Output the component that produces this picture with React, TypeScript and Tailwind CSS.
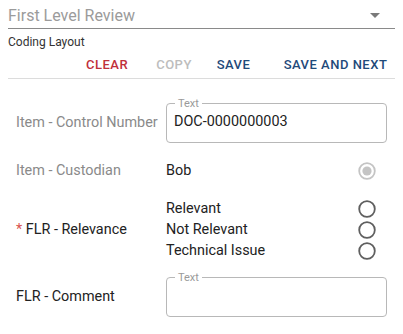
import React from "react";

const Radio = ({ disabled }: { disabled?: boolean }) =>
  disabled ? (
    <svg width="18" height="18" viewBox="0 0 18 18">
      <circle cx="9" cy="9" r="7.8" fill="none" stroke="#c4c4c4" strokeWidth="1.8" />
      <circle cx="9" cy="9" r="4.6" fill="#c4c4c4" />
    </svg>
  ) : (
    <svg width="18" height="18" viewBox="0 0 18 18">
      <circle cx="9" cy="9" r="7.8" fill="none" stroke="#5f5f5f" strokeWidth="1.8" />
    </svg>
  );

const TextBox = ({ value }: { value?: string }) => (
  <fieldset className="h-[45px] w-[221px] shrink-0 rounded-[4px] border border-[#b8b8b8] px-[7px]">
    <legend className="ml-[1px] px-[3px] text-[11px] leading-[11px] text-[#9a9a9a]">Text</legend>
    <div className="mt-[3px] text-[14.4px] leading-[20px] text-[#222]">{value}</div>
  </fieldset>
);

export default function App() {
  return (
    <div
      className="w-[403px] bg-white px-2"
      style={{ fontFamily: "Roboto, 'Liberation Sans', sans-serif" }}
    >
      <div className="flex h-[29px] items-center justify-between border-b border-[#8a8a8a] pt-[3px]">
        <span className="text-[16px] text-[#9b9b9b]">First Level Review</span>
        <svg width="10" height="5" viewBox="0 0 10 5" className="mr-[15px]">
          <path d="M0 0h10L5 5z" fill="#7a7a7a" />
        </svg>
      </div>
      <div className="pt-[6px] text-[12px] leading-[14px] text-[#333]">Coding Layout</div>
      <div className="flex h-[30px] items-center whitespace-nowrap border-b border-[#dcdcdc] pt-[2px] text-[13px] font-medium tracking-[0.5px]">
        <span className="ml-[79px] flex w-[40px] justify-center text-[#c0303a]">CLEAR</span>
        <span className="ml-[30px] flex w-[34px] justify-center text-[#bdbdbd]">COPY</span>
        <span className="ml-[26px] flex w-[33px] justify-center text-[#1f4a7a]">SAVE</span>
        <span className="ml-[34px] flex w-[103px] justify-center text-[#1f4a7a]">SAVE AND NEXT</span>
      </div>

      <div className="mt-[19px] flex items-center pl-2 text-[14.4px]">
        <span className="w-[150px] pt-[5px] text-[#8a8a8a]">Item - Control Number</span>
        <TextBox value="DOC-0000000003" />
      </div>

      <div className="mt-[18px] flex h-[20px] items-center pl-2 text-[14.4px]">
        <span className="w-[150px] text-[#8a8a8a]">Item - Custodian</span>
        <span className="w-[192px] text-[#222]">Bob</span>
        <Radio disabled />
      </div>

      <div className="mt-[17px] flex items-center pl-2 text-[14.4px] text-[#222]">
        <span className="w-[150px]">
          <span className="text-[#d9534f]">*</span> FLR - Relevance
        </span>
        <div className="flex flex-col">
          {["Relevant", "Not Relevant", "Technical Issue"].map((o) => (
            <div key={o} className="flex h-[21px] items-center">
              <span className="w-[192px]">{o}</span>
              <Radio />
            </div>
          ))}
        </div>
      </div>

      <div className="mt-[11px] flex items-center pl-2 text-[14.4px] text-[#222]">
        <span className="w-[150px] pt-[5px]">FLR - Comment</span>
        <TextBox />
      </div>
    </div>
  );
}
